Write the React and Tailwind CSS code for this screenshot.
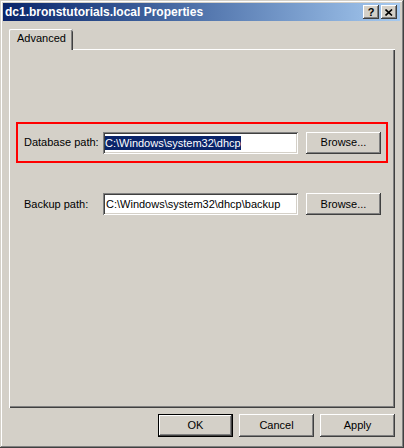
import React from 'react';

const raised =
  'shadow-[inset_-1px_-1px_#404040,inset_1px_1px_#ffffff,inset_-2px_-2px_#808080,inset_2px_2px_#d4d0c8]';
const sunken =
  'shadow-[inset_1px_1px_#808080,inset_-1px_-1px_#ffffff,inset_2px_2px_#404040,inset_-2px_-2px_#d4d0c8]';

function Button({ children, isDefault, className = '' }) {
  if (isDefault) {
    return (
      <div className={`border border-black bg-[#d4d0c8] ${className}`}>
        <div className={`w-full h-full flex items-center justify-center ${raised}`}>{children}</div>
      </div>
    );
  }
  return (
    <div className={`bg-[#d4d0c8] flex items-center justify-center ${raised} ${className}`}>
      {children}
    </div>
  );
}

function TextField({ value, selected }) {
  return (
    <div className={`w-[195px] h-[22px] bg-white flex items-center pl-[2px] ${sunken}`}>
      {selected ? (
        <span className="bg-[#0a246a] text-white leading-[14px] px-0">{value}</span>
      ) : (
        <span className="text-black pl-[1px]">{value}</span>
      )}
    </div>
  );
}

function PathRow({ label, value, selected }) {
  return (
    <div className="flex items-center h-[22px]">
      <span className="w-[79px] text-black">{label}</span>
      <TextField value={value} selected={selected} />
      <Button className="w-[75px] h-[22px] ml-[8px]">Browse...</Button>
    </div>
  );
}

export default function App() {
  return (
    <div className="w-[404px] h-[448px] bg-[#d4d0c8] pt-[3px] pl-[3px] pr-[4px] pb-[3px] flex flex-col text-[11px] font-['Liberation_Sans',Arial,sans-serif] shadow-[inset_-1px_-1px_#404040,inset_1px_1px_#d4d0c8,inset_-2px_-2px_#808080,inset_2px_2px_#ffffff]">
      {/* Title bar */}
      <div className="h-[18px] flex items-center bg-gradient-to-r from-[#0a246a] to-[#a6caf0] pl-[2px] pr-[3px]">
        <span className="text-white font-bold text-[12px] flex-1 leading-none">
          dc1.bronstutorials.local Properties
        </span>
        <div className={`w-[16px] h-[14px] bg-[#d4d0c8] flex items-center justify-center ${raised}`}>
          <span className="font-bold text-[11px] text-black leading-none">?</span>
        </div>
        <div className={`w-[16px] h-[14px] ml-[2px] bg-[#d4d0c8] flex items-center justify-center ${raised}`}>
          <svg width="8" height="7" viewBox="0 0 8 7">
            <path d="M0.5 0.5 L7 6.5 M7 0.5 L0.5 6.5" stroke="#000" strokeWidth="1.6" fill="none" />
          </svg>
        </div>
      </div>

      {/* Tabs */}
      <div className="mt-[8px] pl-[6px] pr-[5px] flex flex-col">
        <div className="flex">
          <div className="relative z-10 -mb-[1px] w-[64px] h-[21px] bg-[#d4d0c8] rounded-t-[2px] flex items-center pl-[8px] shadow-[inset_1px_0_#ffffff,inset_0_1px_#ffffff,inset_-1px_0_#404040,inset_-2px_0_#808080] pb-[2px]">
            <span className="text-black">Advanced</span>
          </div>
        </div>
        <div className="h-[359px] bg-[#d4d0c8] flex flex-col shadow-[inset_1px_1px_#ffffff,inset_-1px_-1px_#404040,inset_-2px_-2px_#808080]">
          <div className="mt-[73px] ml-[7px] w-[372px] h-[41px] border-2 border-[#ff0000] flex items-center pl-[6px]">
            <PathRow label="Database path:" value="C:\Windows\system32\dhcp" selected />
          </div>
          <div className="mt-[30px] ml-[15px]">
            <PathRow label="Backup path:" value="C:\Windows\system32\dhcp\backup" />
          </div>
        </div>
      </div>

      {/* Dialog buttons */}
      <div className="mt-[6px] pr-[5px] flex justify-end gap-[6px]">
        <Button isDefault className="w-[75px] h-[23px]">OK</Button>
        <Button className="w-[75px] h-[23px]">Cancel</Button>
        <Button className="w-[75px] h-[23px]">Apply</Button>
      </div>
    </div>
  );
}
